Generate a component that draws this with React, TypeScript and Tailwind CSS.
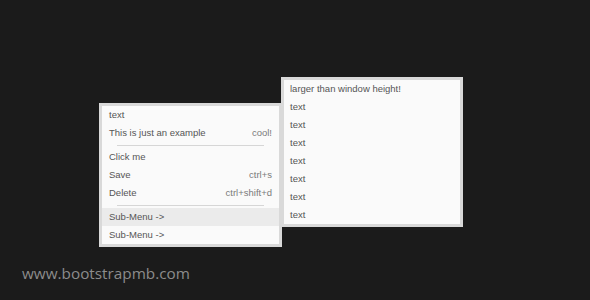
const rowCls = 'flex h-[18px] items-center justify-between px-[7px]';

function Divider() {
  return (
    <div className="flex h-[6px] items-center px-[15px]">
      <div className="h-px w-full bg-[#d6d6d6]" />
    </div>
  );
}

function Item({ label, hint, active }: { label: string; hint?: string; active?: boolean }) {
  return (
    <div className={rowCls + (active ? ' bg-[#ebebeb]' : '')}>
      <span>{label}</span>
      {hint && <span className="text-[#7a7a7a]">{hint}</span>}
    </div>
  );
}

export default function App() {
  const subItems = ['larger than window height!', 'text', 'text', 'text', 'text', 'text', 'text', 'text'];

  return (
    <div className="relative h-[300px] w-[590px] overflow-hidden bg-[#1b1b1b]" style={{ fontFamily: '"Liberation Sans", Arial, sans-serif' }}>
      {/* main context menu */}
      <div className="absolute left-[99px] top-[103px] w-[183px] border-[3px] border-[#d9d9d9] bg-[#fafafa] text-[9.5px] leading-none text-[#555]">
        <Item label="text" />
        <Item label="This is just an example" hint="cool!" />
        <Divider />
        <Item label="Click me" />
        <Item label="Save" hint="ctrl+s" />
        <Item label="Delete" hint="ctrl+shift+d" />
        <Divider />
        <Item label="Sub-Menu ->" active />
        <Item label="Sub-Menu ->" />
      </div>

      {/* sub menu */}
      <div className="absolute left-[281px] top-[77px] w-[182px] border-[3px] border-[#d9d9d9] bg-[#fafafa] text-[9.5px] leading-none text-[#555]">
        {subItems.map((s, i) => (
          <div key={i} className="flex h-[18px] items-center px-[6px]">{s}</div>
        ))}
      </div>

      <div className="absolute left-[22px] top-[266px] text-[15.3px] leading-none text-[#8c8c8c]" style={{ fontFamily: '"Open Sans", sans-serif' }}>
        www.bootstrapmb.com
      </div>
    </div>
  );
}
